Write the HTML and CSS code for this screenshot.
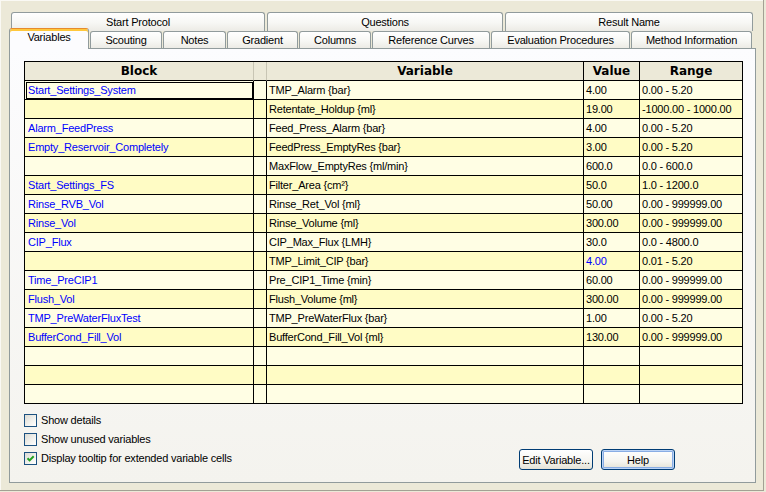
FILE: index.html
```html
<!DOCTYPE html>
<html>
<head>
<meta charset="utf-8">
<link rel="stylesheet" href="styles.css">
</head>
<body>
<div class="window">
  <div class="tabs tabs-back">
    <div class="tab w-start">Start Protocol</div>
    <div class="tab w-questions">Questions</div>
    <div class="tab w-result">Result Name</div>
  </div>
  <div class="tabs tabs-front">
    <div class="tab tab-active w-variables">Variables</div>
    <div class="tab w-scouting">Scouting</div>
    <div class="tab w-notes">Notes</div>
    <div class="tab w-gradient">Gradient</div>
    <div class="tab w-columns">Columns</div>
    <div class="tab w-refcurves">Reference Curves</div>
    <div class="tab w-evaluation">Evaluation Procedures</div>
    <div class="tab w-method">Method Information</div>
  </div>
  <div class="panel">
    <div class="grid">
      <div class="row head">
        <div class="cell h light-sep">Block</div>
        <div class="cell h light-sep"></div>
        <div class="cell h">Variable</div>
        <div class="cell h">Value</div>
        <div class="cell h">Range</div>
      </div>
      <div class="row odd">
        <div class="cell blk blue focus">Start_Settings_System</div><div class="cell"></div>
        <div class="cell">TMP_Alarm {bar}</div><div class="cell">4.00</div><div class="cell">0.00 - 5.20</div>
      </div>
      <div class="row even">
        <div class="cell blk blue"></div><div class="cell"></div>
        <div class="cell">Retentate_Holdup {ml}</div><div class="cell">19.00</div><div class="cell">-1000.00 - 1000.00</div>
      </div>
      <div class="row odd">
        <div class="cell blk blue">Alarm_FeedPress</div><div class="cell"></div>
        <div class="cell">Feed_Press_Alarm {bar}</div><div class="cell">4.00</div><div class="cell">0.00 - 5.20</div>
      </div>
      <div class="row even">
        <div class="cell blk blue">Empty_Reservoir_Completely</div><div class="cell"></div>
        <div class="cell">FeedPress_EmptyRes {bar}</div><div class="cell">3.00</div><div class="cell">0.00 - 5.20</div>
      </div>
      <div class="row odd">
        <div class="cell blk blue"></div><div class="cell"></div>
        <div class="cell">MaxFlow_EmptyRes {ml/min}</div><div class="cell">600.0</div><div class="cell">0.0 - 600.0</div>
      </div>
      <div class="row even">
        <div class="cell blk blue">Start_Settings_FS</div><div class="cell"></div>
        <div class="cell">Filter_Area {cm²}</div><div class="cell">50.0</div><div class="cell">1.0 - 1200.0</div>
      </div>
      <div class="row odd">
        <div class="cell blk blue">Rinse_RVB_Vol</div><div class="cell"></div>
        <div class="cell">Rinse_Ret_Vol {ml}</div><div class="cell">50.00</div><div class="cell">0.00 - 999999.00</div>
      </div>
      <div class="row even">
        <div class="cell blk blue">Rinse_Vol</div><div class="cell"></div>
        <div class="cell">Rinse_Volume {ml}</div><div class="cell">300.00</div><div class="cell">0.00 - 999999.00</div>
      </div>
      <div class="row odd">
        <div class="cell blk blue">CIP_Flux</div><div class="cell"></div>
        <div class="cell">CIP_Max_Flux {LMH}</div><div class="cell">30.0</div><div class="cell">0.0 - 4800.0</div>
      </div>
      <div class="row even">
        <div class="cell blk blue"></div><div class="cell"></div>
        <div class="cell">TMP_Limit_CIP {bar}</div><div class="cell blue">4.00</div><div class="cell">0.01 - 5.20</div>
      </div>
      <div class="row odd">
        <div class="cell blk blue">Time_PreCIP1</div><div class="cell"></div>
        <div class="cell">Pre_CIP1_Time {min}</div><div class="cell">60.00</div><div class="cell">0.00 - 999999.00</div>
      </div>
      <div class="row even">
        <div class="cell blk blue">Flush_Vol</div><div class="cell"></div>
        <div class="cell">Flush_Volume {ml}</div><div class="cell">300.00</div><div class="cell">0.00 - 999999.00</div>
      </div>
      <div class="row odd">
        <div class="cell blk blue">TMP_PreWaterFluxTest</div><div class="cell"></div>
        <div class="cell">TMP_PreWaterFlux {bar}</div><div class="cell">1.00</div><div class="cell">0.00 - 5.20</div>
      </div>
      <div class="row even">
        <div class="cell blk blue">BufferCond_Fill_Vol</div><div class="cell"></div>
        <div class="cell">BufferCond_Fill_Vol {ml}</div><div class="cell">130.00</div><div class="cell">0.00 - 999999.00</div>
      </div>
      <div class="row odd">
        <div class="cell"></div><div class="cell"></div><div class="cell"></div><div class="cell"></div><div class="cell"></div>
      </div>
      <div class="row even">
        <div class="cell"></div><div class="cell"></div><div class="cell"></div><div class="cell"></div><div class="cell"></div>
      </div>
      <div class="row odd">
        <div class="cell"></div><div class="cell"></div><div class="cell"></div><div class="cell"></div><div class="cell"></div>
      </div>
    </div>

    <div class="bottom">
      <div class="checks">
        <label class="check"><span class="box"></span><span>Show details</span></label>
        <label class="check"><span class="box"></span><span>Show unused variables</span></label>
        <label class="check"><span class="box"><svg width="11" height="11" viewBox="0 0 11 11"><path d="M2.5 5.2 L4.6 7.4 L8.7 3.2" fill="none" stroke="#21a121" stroke-width="2"/></svg></span><span>Display tooltip for extended variable cells</span></label>
      </div>
      <div class="buttons">
        <button class="btn">Edit Variable...</button>
        <button class="btn btn-default">Help</button>
      </div>
    </div>
  </div>
</div>
</body>
</html>
```

FILE: styles.css
```css
html, body {
  margin: 0;
  padding: 0;
  background: #ece9d8;
}

body {
  font-family: "Liberation Sans", Arial, sans-serif;
  font-size: 11px;
  letter-spacing: -0.2px;
  color: #000;
}

.window {
  width: 766px;
  height: 492px;
  box-sizing: border-box;
  background: #ece9d8;
  box-shadow: inset -2px -1px 0 #ece9d8, inset -3px -2px 0 #a3a194, inset 1px 1px 0 #faf9f4;
  overflow: hidden;
}

.tabs {
  display: flex;
}

.tabs-back {
  gap: 2px;
  margin-left: 11px;
  padding-top: 12px;
  height: 19px;
}

.tabs-front {
  gap: 1px;
  margin-left: 9px;
  height: 17px;
  align-items: flex-end;
}

.tab {
  box-sizing: border-box;
  border: 1px solid #919b9c;
  border-bottom: none;
  border-radius: 3px 3px 0 0;
  background: linear-gradient(#ffffff, #f7f7f4 55%, #ecebe5);
  text-align: center;
  white-space: nowrap;
}

.tabs-back .tab {
  height: 19px;
  line-height: 18px;
}

.tabs-front .tab {
  height: 17px;
  line-height: 16px;
}

.tabs-front .tab-active {
  position: relative;
  z-index: 1;
  height: 21px;
  margin-bottom: -1px;
  line-height: 17px;
  background: #fcfcfe;
  border-top: 1px solid #e68b2c;
  box-shadow: inset 0 2px 0 #ffc83c;
}

.w-start { width: 254px; }
.w-questions { width: 236px; }
.w-result { width: 248px; }
.w-variables { width: 80px; }
.w-scouting { width: 72px; }
.w-notes { width: 63px; }
.w-gradient { width: 71px; }
.w-columns { width: 72px; }
.w-refcurves { width: 118px; }
.w-evaluation { width: 139px; }
.w-method { width: 121px; }

.panel {
  margin-left: 9px;
  width: 747px;
  height: 435px;
  box-sizing: border-box;
  border: 1px solid #919b9c;
  background: linear-gradient(#fcfcfe, #f4f3ee);
}

.grid {
  display: grid;
  grid-template-columns: 229px 13px 317px 56px 103px;
  grid-auto-rows: 19px;
  width: max-content;
  margin: 12px 0 0 14px;
  border-left: 1px solid #000;
  border-top: 1px solid #000;
}

.row {
  display: contents;
}

.cell {
  box-sizing: border-box;
  border-right: 1px solid #000;
  border-bottom: 1px solid #000;
  padding-left: 2px;
  line-height: 18px;
  white-space: nowrap;
  overflow: hidden;
}

.row.odd .cell {
  background: #fffee4;
}

.row.even .cell {
  background: #fffcc5;
}

.cell.h {
  background: #ece9d8;
  font-family: "DejaVu Sans", Verdana, sans-serif;
  font-weight: bold;
  font-size: 12px;
  letter-spacing: 0;
  text-align: center;
  padding-left: 0;
  padding-top: 1px;
  line-height: 17px;
}

.cell.h.light-sep {
  border-right-color: #c8c5b4;
}

.cell.blk {
  padding-left: 3px;
}

.blue {
  color: #0000ff;
}

.cell.focus {
  outline: 1px solid #000;
  outline-offset: -2px;
}

.bottom {
  display: flex;
  margin: 10px 0 0 14px;
}

.checks {
  display: flex;
  flex-direction: column;
  gap: 6px;
}

.check {
  display: flex;
  align-items: center;
  gap: 4px;
  height: 13px;
  line-height: 13px;
}

.box {
  width: 13px;
  height: 13px;
  box-sizing: border-box;
  border: 1px solid #1c5180;
  background: linear-gradient(135deg, #dcdbd4, #f6f6f3 70%, #ffffff);
  display: flex;
  align-items: center;
  justify-content: center;
}

.box svg {
  display: block;
}

.buttons {
  display: flex;
  gap: 8px;
  margin-left: auto;
  margin-right: 80px;
  margin-top: 35px;
  align-self: flex-start;
}

.btn {
  width: 74px;
  height: 21px;
  box-sizing: border-box;
  padding: 0;
  border: 1px solid #003c74;
  border-radius: 3px;
  background: linear-gradient(#ffffff, #f5f4ef 60%, #e3e1d6);
  font-family: "Liberation Sans", Arial, sans-serif;
  font-size: 11px;
  letter-spacing: -0.2px;
  color: #000;
  white-space: nowrap;
  text-align: center;
}

.btn-default {
  box-shadow: inset 0 0 0 1px #bcd4f6, inset 0 0 0 2px #89ade4;
}
```
